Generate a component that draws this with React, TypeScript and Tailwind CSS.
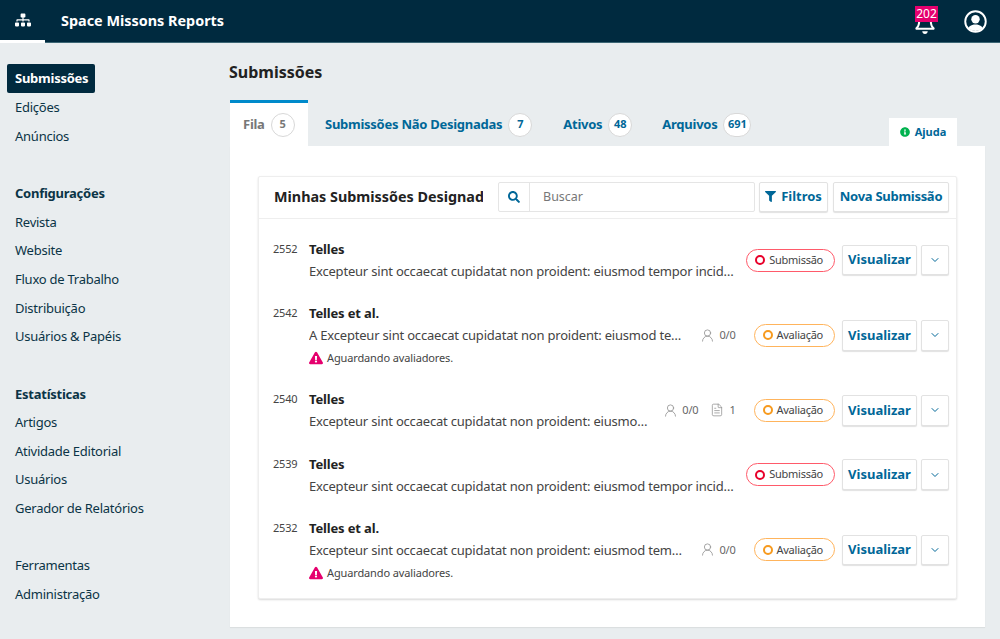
import { FaSitemap, FaRegBell, FaSearch, FaFilter, FaExclamationTriangle, FaInfoCircle } from "react-icons/fa";
import { ChevronDown, FileText, UserRound } from "lucide-react";
import { clsx } from "clsx";

type Stage = "Submissão" | "Avaliação";

interface Submission {
  id: string;
  author: string;
  title: string;
  stage: Stage;
  reviewers?: boolean;
  files?: string;
  notice?: boolean;
}

const lorem = "Excepteur sint occaecat cupidatat non proident: eiusmod tempor incididunt ut labore et dolore";

const submissions: Submission[] = [
  { id: "2552", author: "Telles", title: lorem, stage: "Submissão" },
  { id: "2542", author: "Telles et al.", title: "A " + lorem, stage: "Avaliação", reviewers: true, notice: true },
  { id: "2540", author: "Telles", title: lorem, stage: "Avaliação", reviewers: true, files: "1" },
  { id: "2539", author: "Telles", title: lorem, stage: "Submissão" },
  { id: "2532", author: "Telles et al.", title: lorem, stage: "Avaliação", reviewers: true, notice: true },
];

const navGroups = [
  { items: ["Edições", "Anúncios"] },
  { title: "Configurações", items: ["Revista", "Website", "Fluxo de Trabalho", "Distribuição", "Usuários & Papéis"] },
  { title: "Estatísticas", items: ["Artigos", "Atividade Editorial", "Usuários", "Gerador de Relatórios"] },
  { items: ["Ferramentas", "Administração"] },
];

function Sidebar() {
  return (
    <aside className="w-[230px] shrink-0 pt-[21px] text-[13px] tracking-[-0.25px] text-[#0b3446]">
      <div className="h-[29.6px] pl-[7px]">
        <span className="inline-flex h-[29px] items-center rounded-[2px] bg-[#002a3f] pl-[8px] pr-[7px] font-bold text-white">
          Submissões
        </span>
      </div>
      {navGroups.map((group, i) => (
        <div key={i} className={clsx(i > 0 && "mt-[28.65px]")}>
          {group.title && <div className="flex h-[28.65px] items-center pl-[15px] font-bold">{group.title}</div>}
          {group.items.map((item) => (
            <div key={item} className="flex h-[28.65px] items-center pl-[15px]">
              {item}
            </div>
          ))}
        </div>
      ))}
    </aside>
  );
}

function Count({ value, muted }: { value: string; muted?: boolean }) {
  return (
    <span
      className={clsx(
        "ml-[6px] inline-flex h-[24px] min-w-[24px] items-center justify-center rounded-full border-[1.5px] border-[#d8d8d8] bg-white px-[3.5px] text-[11px] font-bold tracking-normal",
        muted ? "text-[#777]" : "text-[#006798]",
      )}
    >
      {value}
    </span>
  );
}

function StageBadge({ stage }: { stage: Stage }) {
  const red = stage === "Submissão";
  return (
    <span
      className={clsx(
        "inline-flex h-[23px] items-center rounded-full border pl-[8px] pr-[11px] text-[11px] tracking-[-0.25px] text-[#444]",
        red ? "border-[#ff5a6a]" : "border-[#ffb45c]",
      )}
    >
      <span className={clsx("mr-[4px] h-[10px] w-[10px] rounded-full border-2", red ? "border-[#e8002a]" : "border-[#f79a1e]")} />
      {stage}
    </span>
  );
}

function SubmissionRow({ row }: { row: Submission }) {
  return (
    <div className="flex items-center py-[10.1px]">
      <div className="flex min-w-0 flex-1 pr-[11px]">
        <div className="w-[36px] shrink-0 pt-[1px] text-[11px] leading-[20px] tracking-[-0.2px] text-[#444]">{row.id}</div>
        <div className="min-w-0 flex-1">
          <div className="text-[13px] font-bold leading-[22px] tracking-[-0.15px] text-[#222]">{row.author}</div>
          <div className="truncate text-[13px] leading-[22px] tracking-[-0.2px] text-[#444]">{row.title}</div>
          {row.notice && (
            <div className="flex h-[22px] items-center pt-[2px] text-[11px] tracking-[-0.13px] text-[#444]">
              <FaExclamationTriangle className="mr-[4px] h-[14px] w-[14px] text-[#e5006e]" />
              Aguardando avaliadores.
            </div>
          )}
        </div>
      </div>
      {(row.reviewers || row.files) && (
        <div className="mr-[18px] flex items-center text-[11px] tracking-[-0.2px] text-[#666]">
          {row.reviewers && (
            <span className="flex items-center">
              <UserRound className="mr-[4px] h-[15px] w-[15px] text-[#888]" strokeWidth={1.2} />
              0/0
            </span>
          )}
          {row.files && (
            <span className="ml-[12px] flex items-center">
              <FileText className="mr-[5px] h-[14px] w-[14px] text-[#888]" strokeWidth={1.2} />
              {row.files}
            </span>
          )}
        </div>
      )}
      <StageBadge stage={row.stage} />
      <button className="ml-[7px] h-[30.5px] w-[75px] rounded-[2px] border border-[#e2e2e2] bg-white text-[13px] font-bold text-[#006798] shadow-[0_1px_1px_rgba(0,0,0,0.12)]">
        Visualizar
      </button>
      <button className="ml-[4px] flex h-[30.5px] w-[28px] items-center justify-center rounded-[2px] border border-[#e2e2e2] bg-white text-[#006798] shadow-[0_1px_1px_rgba(0,0,0,0.12)]">
        <ChevronDown className="h-[12px] w-[12px]" />
      </button>
    </div>
  );
}

function Avatar() {
  return (
    <svg viewBox="0 0 24 24" className="mr-[13px] h-[23px] w-[23px]">
      <defs>
        <clipPath id="avatar-ring">
          <circle cx="12" cy="12" r="10" />
        </clipPath>
      </defs>
      <g clipPath="url(#avatar-ring)" fill="#fff">
        <circle cx="12" cy="9.6" r="4.4" />
        <path d="M3 24c0-6 3.5-9 9-9s9 3 9 9z" />
      </g>
      <circle cx="12" cy="12" r="10.7" fill="none" stroke="#fff" strokeWidth="2" />
    </svg>
  );
}

export default function App() {
  return (
    <div className="h-[639px] overflow-hidden bg-[#e9edef] font-['Noto_Sans',sans-serif]">
      <header className="flex h-[43px] items-center border-b border-[#3c6675] bg-[#002a3f] text-white">
        <div className="flex h-[43px] w-[45px] items-center justify-center border-b-[3px] border-white">
          <FaSitemap className="h-[16px] w-[16px]" />
        </div>
        <div className="ml-[16px] text-[14.4px] font-bold">Space Missons Reports</div>
        <div className="relative ml-auto mr-[28px] mt-[3px]">
          <FaRegBell className="h-[22px] w-[22px]" />
          <span className="absolute left-[1px] top-[-6px] flex h-[16px] w-[23px] items-center justify-center bg-[#e5006e] text-[12px] leading-none">
            202
          </span>
        </div>
        <Avatar />
      </header>

      <div className="flex">
        <Sidebar />
        <main className="w-[755px]">
          <h1 className="-ml-px flex h-[57px] items-center text-[16px] font-bold text-[#222]">Submissões</h1>

          <div className="flex h-[46px] items-stretch text-[13px] font-bold tracking-[-0.26px]">
            <div className="flex w-[78px] items-center border-t-[3px] border-[#008acb] bg-white pl-[13px] text-[#777]">
              Fila
              <Count value="5" muted />
            </div>
            <div className="flex items-center pl-[17px] pt-[3px] text-[#006798]">
              Submissões Não Designadas
              <Count value="7" />
            </div>
            <div className="flex items-center pl-[31px] pt-[3px] text-[#006798]">
              Ativos
              <Count value="48" />
            </div>
            <div className="flex items-center pl-[30px] pt-[3px] text-[#006798]">
              Arquivos
              <Count value="691" />
            </div>
            <div className="ml-auto mr-[28px] flex h-[28px] w-[68px] items-center justify-center self-end bg-white text-[11px] font-bold tracking-normal text-[#006798]">
              <FaInfoCircle className="mr-[5px] h-[10px] w-[10px] text-[#00b24e]" />
              Ajuda
            </div>
          </div>

          <div className="h-[481px] bg-white px-[28px] pt-[30px] shadow-[0_1px_1px_rgba(0,0,0,0.06)]">
            <section className="rounded-[2px] border border-[#eee] bg-white shadow-[0_1px_2px_rgba(0,0,0,0.15)]">
              <div className="flex h-[42px] items-center border-b border-[#eee] pb-[2px] pl-[15px] pr-[7px]">
                <div className="w-[209px] shrink-0 overflow-hidden whitespace-nowrap text-[14.35px] font-bold text-[#222]">
                  Minhas Submissões Designadas
                </div>
                <div className="ml-[15px] flex h-[30px] flex-1 items-center rounded-[2px] border border-[#e5e5e5] text-[12.5px] text-[#777]">
                  <span className="flex h-full w-[31px] items-center justify-center border-r border-[#e5e5e5]">
                    <FaSearch className="h-[12px] w-[12px] text-[#006798]" />
                  </span>
                  <span className="pl-[13px] pt-[1px]">Buscar</span>
                </div>
                <button className="ml-[4px] flex h-[30px] w-[69px] items-center justify-center rounded-[2px] border border-[#e2e2e2] bg-white text-[13px] font-bold text-[#006798] shadow-[0_1px_1px_rgba(0,0,0,0.12)]">
                  <FaFilter className="mr-[5px] h-[11px] w-[11px]" />
                  Filtros
                </button>
                <button className="ml-[5px] h-[30px] w-[116px] rounded-[2px] border border-[#e2e2e2] bg-white text-[13px] font-bold tracking-[-0.28px] text-[#006798] shadow-[0_1px_1px_rgba(0,0,0,0.12)]">
                  Nova Submissão
                </button>
              </div>
              <div className="pb-[5px] pl-[14px] pr-[7px] pt-[9px]">
                {submissions.map((row) => (
                  <SubmissionRow key={row.id} row={row} />
                ))}
              </div>
            </section>
          </div>
        </main>
      </div>
    </div>
  );
}
